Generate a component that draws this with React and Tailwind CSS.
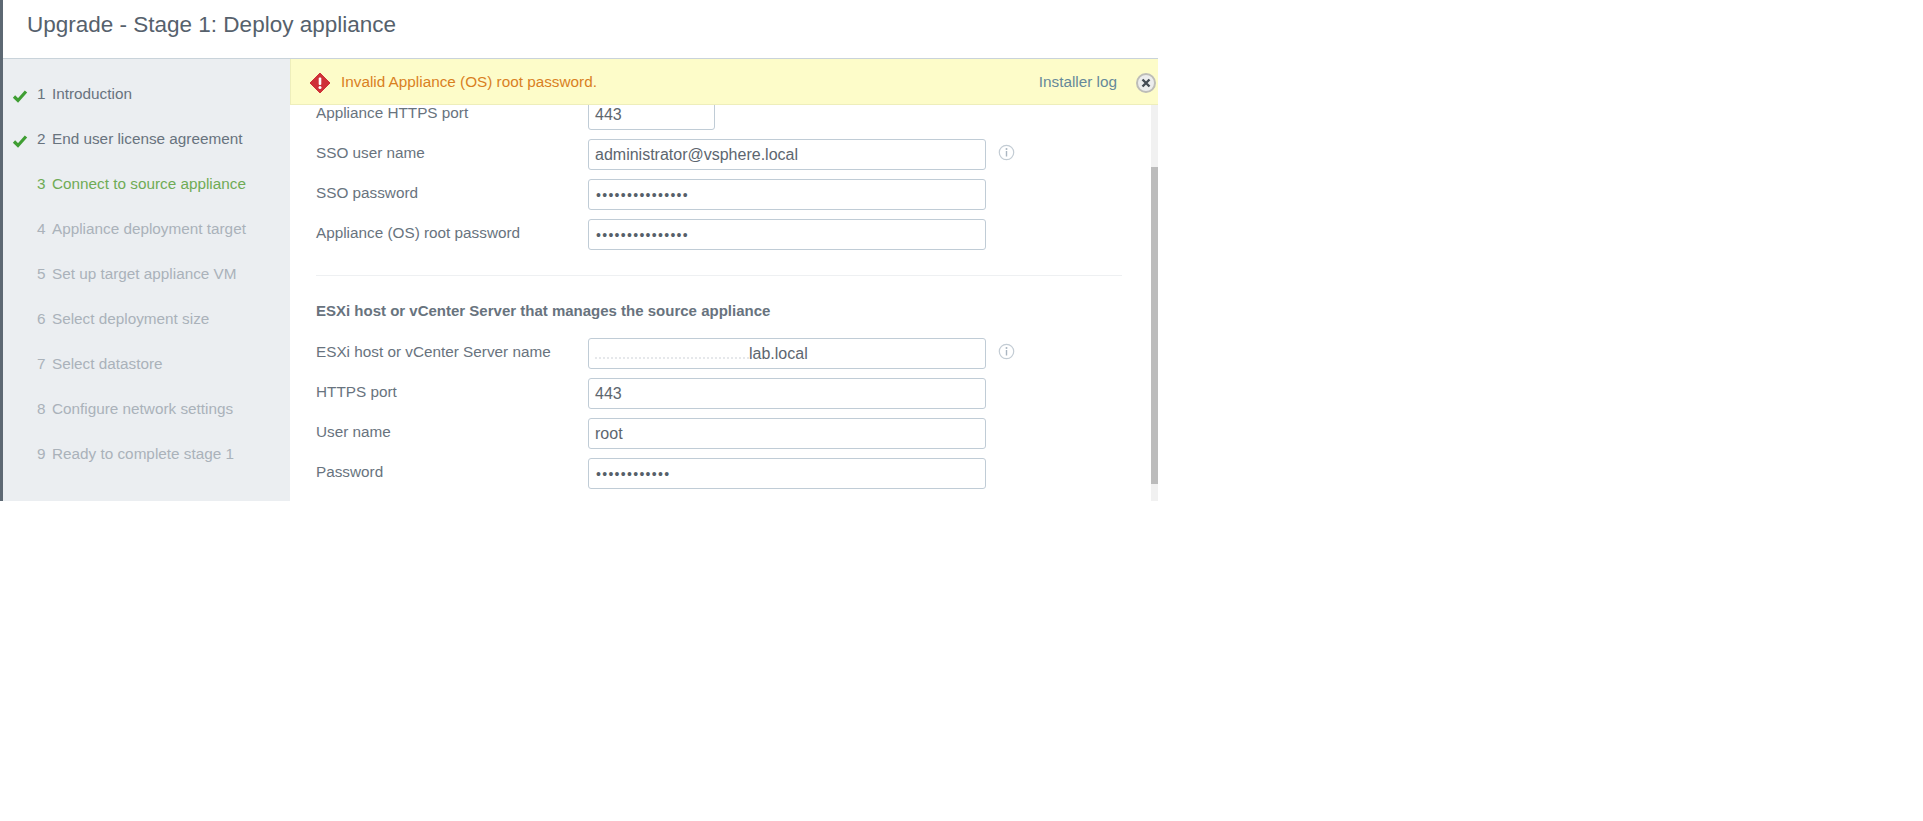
const steps = [
  { n: 1, label: 'Introduction', state: 'done' },
  { n: 2, label: 'End user license agreement', state: 'done' },
  { n: 3, label: 'Connect to source appliance', state: 'current' },
  { n: 4, label: 'Appliance deployment target' },
  { n: 5, label: 'Set up target appliance VM' },
  { n: 6, label: 'Select deployment size' },
  { n: 7, label: 'Select datastore' },
  { n: 8, label: 'Configure network settings' },
  { n: 9, label: 'Ready to complete stage 1' },
];

function InfoIcon() {
  return (
    <svg width="17" height="17" viewBox="0 0 17 17" className="ml-[12px] mt-[-5px] shrink-0">
      <circle cx="8.5" cy="8.5" r="7.2" fill="none" stroke="#c3ccd4" strokeWidth="1.2" />
      <circle cx="8.5" cy="5" r="1" fill="#aab6c1" />
      <rect x="7.8" y="7" width="1.4" height="5.5" fill="#aab6c1" />
    </svg>
  );
}

function CheckMark() {
  return (
    <svg width="16" height="14" viewBox="0 0 16 14" className="shrink-0">
      <path d="M2 7.5 L6 11.5 L14 2.5" fill="none" stroke="#3f9e33" strokeWidth="3.2" />
    </svg>
  );
}

function Row({ label, children, info, narrow }) {
  return (
    <div className="flex items-center h-[31px]">
      <label className="w-[272px] shrink-0 text-[15.3px] text-[#68737e] mt-[-3px]">{label}</label>
      <div className={`flex items-center h-[31px] ${narrow ? 'w-[127px]' : 'w-[398px]'} shrink-0 rounded-[3px] border border-[#c0ccd6] bg-white pl-[6px] pt-[1px] text-[16px] text-[#5d666f]`}>
        {children}
      </div>
      {info && <InfoIcon />}
    </div>
  );
}

function Dots({ count }) {
  return <span className="ml-[1px] text-[14px] tracking-[1.3px] text-[#565f69]">{'•'.repeat(count)}</span>;
}

export default function App() {
  return (
    <div className="min-h-[821px] bg-white font-['Liberation_Sans',Arial,sans-serif]">
      <div className="flex flex-col w-[1158px] h-[501px] border-l-[3px] border-[#5d6873]">
        {/* Header */}
        <div className="h-[59px] shrink-0 flex items-center pl-[24px] pb-[9px] border-b border-[#c9d3da] text-[22.5px] text-[#56616c]">
          Upgrade - Stage 1: Deploy appliance
        </div>

        <div className="flex flex-1 min-h-0">
          {/* Steps */}
          <div className="w-[287px] shrink-0 bg-[#ebeef1] pt-[13px]">
            {steps.map((s) => (
              <div key={s.n} className={`flex items-center h-[45px] text-[15.3px] ${s.state === 'current' ? 'text-[#6fab55]' : s.state === 'done' ? 'text-[#68737e]' : 'text-[#aab2ba]'}`}>
                <span className="w-[34px] shrink-0 pl-[9px] pt-[3px]">
                  {s.state === 'done' && <CheckMark />}
                </span>
                <span className="w-[15px] shrink-0">{s.n}</span>
                <span>{s.label}</span>
              </div>
            ))}
          </div>

          {/* Main */}
          <div className="flex-1 min-w-0 flex flex-col">
            <div className="h-[46px] shrink-0 flex items-center pl-[18px] pt-[2px] pr-[2px] bg-[#fdfcc9] border-b border-[#eeeebb] border-l border-l-[#eeeebb]">
              <svg width="22" height="22" viewBox="0 0 22 22" className="shrink-0">
                <path d="M11 1 L21 11 L11 21 L1 11 Z" fill="#cf3238" stroke="#cf3238" strokeWidth="1" strokeLinejoin="round" />
                <rect x="9.7" y="5.5" width="2.6" height="7.5" rx="1" fill="#fff" />
                <circle cx="11" cy="15.5" r="1.5" fill="#fff" />
              </svg>
              <span className="ml-[10px] text-[15.3px] text-[#d9801f]">Invalid Appliance (OS) root password.</span>
              <span className="ml-auto text-[15.3px] text-[#66899a]">Installer log</span>
              <span className="ml-[19px] w-[20px] h-[20px] rounded-full bg-[#eceded] border-2 border-[#bdbdb8] flex items-center justify-center">
                <svg width="10" height="10" viewBox="0 0 10 10">
                  <path d="M1.5 1.5 L8.5 8.5 M8.5 1.5 L1.5 8.5" stroke="#444c54" strokeWidth="2.4" />
                </svg>
              </span>
            </div>

            <div className="flex flex-1 min-h-0">
              <div className="flex-1 min-w-0 overflow-hidden pl-[26px] pr-[29px]">
                <div className="flex flex-col gap-[9px] mt-[-6px]">
                  <Row label="Appliance HTTPS port" narrow>443</Row>
                  <Row label="SSO user name" info>administrator@vsphere.local</Row>
                  <Row label="SSO password"><Dots count={15} /></Row>
                  <Row label="Appliance (OS) root password"><Dots count={15} /></Row>
                </div>

                <div className="mt-[25px] border-t border-[#eef0f2]" />
                <h3 className="mt-[27px] mb-[19px] text-[15px] leading-[16px] font-bold text-[#68737e]">
                  ESXi host or vCenter Server that manages the source appliance
                </h3>

                <div className="flex flex-col gap-[9px]">
                  <Row label="ESXi host or vCenter Server name" info>
                    <span className="w-[154px] h-[10px] shrink-0 border-b-2 border-dotted border-[#e6e8eb]" />
                    <span>lab.local</span>
                  </Row>
                  <Row label="HTTPS port">443</Row>
                  <Row label="User name">root</Row>
                  <Row label="Password"><Dots count={12} /></Row>
                </div>
              </div>

              {/* Scrollbar */}
              <div className="w-[7px] shrink-0 bg-[#f1f1f1] pt-[62px] pb-[17px]">
                <div className="h-full bg-[#bcbcbc]" />
              </div>
            </div>
          </div>
        </div>
      </div>
    </div>
  );
}
